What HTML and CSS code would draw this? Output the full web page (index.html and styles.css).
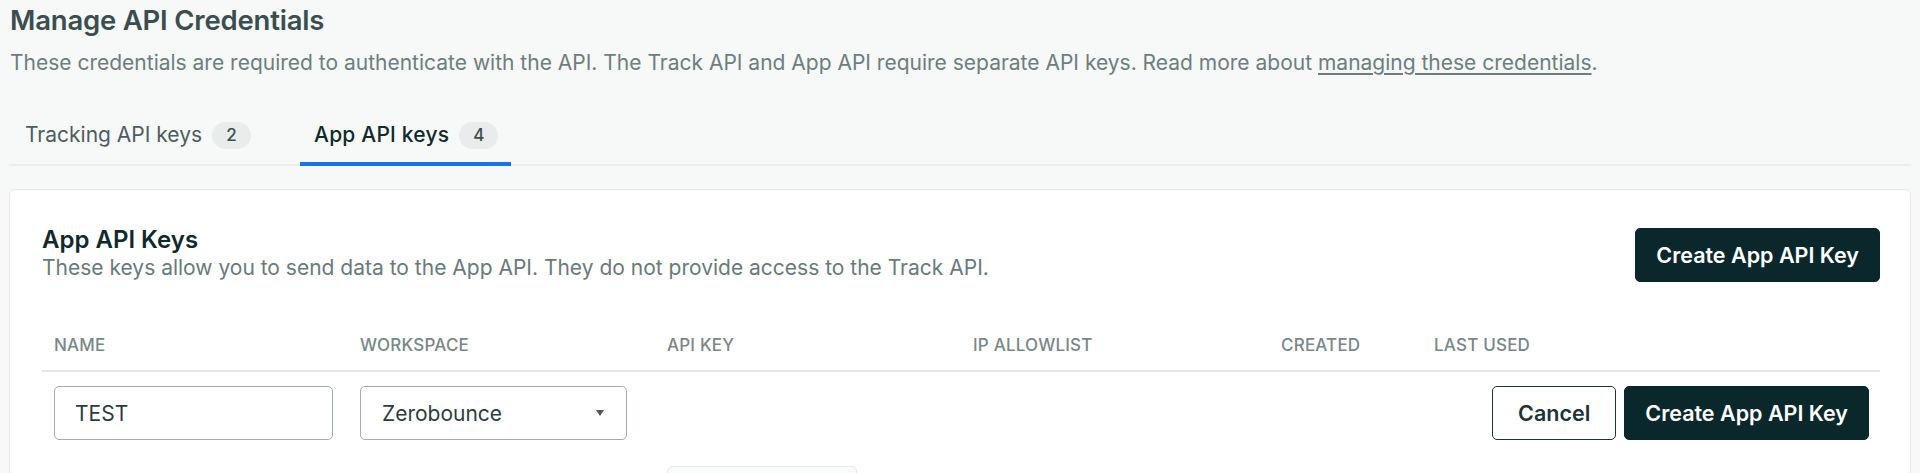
FILE: index.html
```html
<!DOCTYPE html>
<html lang="en">
<head>
<meta charset="utf-8">
<title>Manage API Credentials</title>
<link rel="stylesheet" href="styles.css">
</head>
<body>
<main class="page">
  <h1 class="title">Manage API Credentials</h1>
  <p class="intro">These credentials are required to authenticate with the API. The Track API and App API require separate API keys. Read more about <a href="#" class="intro-link">managing these credentials</a>.</p>

  <nav class="tabs">
    <a href="#" class="tab">Tracking API keys <span class="badge">2</span></a>
    <a href="#" class="tab tab-active">App API keys <span class="badge">4</span></a>
  </nav>

  <section class="card">
    <div class="card-head">
      <div class="card-titles">
        <h2 class="card-title">App API Keys</h2>
        <p class="card-sub">These keys allow you to send data to the App API. They do not provide access to the Track API.</p>
      </div>
      <button class="btn btn-primary" type="button">Create App API Key</button>
    </div>

    <div class="table">
      <div class="row row-head">
        <div class="cell">NAME</div>
        <div class="cell">WORKSPACE</div>
        <div class="cell">API KEY</div>
        <div class="cell">IP ALLOWLIST</div>
        <div class="cell">CREATED</div>
        <div class="cell">LAST USED</div>
      </div>
      <div class="row row-edit">
        <div class="cell"><input class="field field-name" type="text" value="TEST"></div>
        <div class="cell">
          <div class="field field-select">
            <span>Zerobounce</span>
            <span class="caret"></span>
          </div>
        </div>
        <div class="cell"></div>
        <div class="cell"></div>
        <div class="cell cell-actions">
          <button class="btn btn-outline" type="button">Cancel</button>
          <button class="btn btn-primary" type="button">Create App API Key</button>
        </div>
      </div>
      <div class="row row-body">
        <div class="cell"></div>
        <div class="cell"></div>
        <div class="cell"><div class="key-box"></div></div>
        <div class="cell"></div>
        <div class="cell"></div>
        <div class="cell"></div>
      </div>
    </div>
  </section>
</main>
</body>
</html>
```

FILE: styles.css
```css
* { box-sizing: border-box; }

html, body {
  margin: 0;
  padding: 0;
  background: #f7f8f8;
  font-family: Inter, "Noto Sans", "Liberation Sans", sans-serif;
  overflow: hidden;
}

.page {
  padding: 3px 9px 0 9px;
}

.title {
  margin: 0 0 0 1px;
  font-size: 27.5px;
  line-height: 34px;
  font-weight: 600;
  color: #3a4e50;
  letter-spacing: -0.2px;
}

.intro {
  margin: 12px 0 0 1px;
  font-size: 21px;
  line-height: 28px;
  color: #6d7e7f;
}

.intro-link {
  color: #6d7e7f;
  text-decoration: underline;
  text-underline-offset: 3px;
}

.tabs {
  display: flex;
  gap: 36px;
  margin-top: 30px;
  padding-left: 2px;
  border-bottom: 2px solid #eceeee;
}

.tab {
  display: flex;
  align-items: center;
  gap: 10px;
  padding: 14px 13px 13px 14px;
  margin-bottom: -2px;
  border-bottom: 4px solid transparent;
  font-size: 21px;
  line-height: 28px;
  color: #4d5d5f;
  text-decoration: none;
}

.tab-active {
  color: #10292c;
  font-weight: 500;
  letter-spacing: 0.2px;
  border-bottom-color: #1673ea;
}

.badge {
  display: inline-flex;
  align-items: center;
  justify-content: center;
  min-width: 39px;
  height: 27px;
  padding: 0 12px;
  border-radius: 14px;
  background: #e8ecec;
  color: #3e4e50;
  font-size: 17px;
  font-weight: 500;
  letter-spacing: 0;
}

.card {
  margin-top: 23px;
  background: #ffffff;
  border: 1px solid #e7eaea;
  border-radius: 6px;
  padding: 38px 30px 40px 32px;
}

.card-head {
  display: flex;
  align-items: center;
  justify-content: space-between;
}

.card-titles {
  margin-top: -3px;
}

.card-title {
  margin: 0;
  font-size: 24px;
  line-height: 28px;
  font-weight: 600;
  color: #10292c;
}

.card-sub {
  margin: 0;
  font-size: 21px;
  line-height: 28px;
  color: #687a7b;
}

.btn {
  font-family: inherit;
  height: 54px;
  border-radius: 5px;
  font-size: 21.5px;
  font-weight: 600;
  cursor: pointer;
}

.btn-primary {
  background: #0a282b;
  color: #ffffff;
  border: 1px solid #0a282b;
  padding: 0 20px;
}

.btn-outline {
  background: #ffffff;
  color: #1d3335;
  border: 1.5px solid #1d3335;
  padding: 0 25px;
}

.table {
  margin-top: 32px;
}

.row {
  display: grid;
  grid-template-columns: 306px 307px 306px 308px 153px 1fr;
}

.row-head {
  height: 58px;
  align-items: center;
  border-bottom: 2px solid #e2e7e7;
  padding-top: 5px;
}

.row-head .cell {
  padding: 0 12px;
  font-size: 17px;
  font-weight: 500;
  color: #788788;
  letter-spacing: 0.2px;
}

.row-edit {
  padding: 14px 0;
  align-items: center;
}

.row-edit .cell {
  padding-left: 12px;
}

.field {
  height: 54px;
  border: 1px solid #a3adae;
  border-radius: 5px;
  background: #ffffff;
  font-family: inherit;
  font-size: 21px;
  color: #2a3c3e;
}

.field-name {
  width: 279px;
  padding: 0 20px;
  outline: none;
}

.field-select {
  width: 267px;
  display: flex;
  align-items: center;
  justify-content: space-between;
  padding: 0 22px 0 21px;
}

.caret {
  width: 0;
  height: 0;
  border-left: 4px solid transparent;
  border-right: 4px solid transparent;
  border-top: 6px solid #4f5a5b;
}

.cell-actions {
  grid-column: 5 / 7;
  display: flex;
  justify-content: flex-end;
  gap: 8px;
  padding-right: 11px;
}

.row-body {
  padding-top: 12px;
}

.row-body .cell {
  padding-left: 12px;
}

.key-box {
  width: 190px;
  height: 40px;
  border: 1px solid #e6e9e9;
  border-radius: 6px;
  background: #fafbfb;
}
```
